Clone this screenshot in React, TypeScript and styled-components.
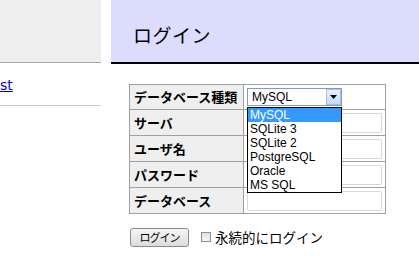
import React from "react";
import styled, { createGlobalStyle } from "styled-components";

const Global = createGlobalStyle`
  html, body { margin: 0; padding: 0; background: #fff; }
  body { font-family: "Liberation Sans", "Noto Sans CJK JP", sans-serif; color: #000; overflow: hidden; }
`;

const Page = styled.div`
  display: flex;
  gap: 10px;
  width: 419px;
  height: 269px;
  overflow: hidden;
`;

const Sidebar = styled.div`
  width: 101px;
  flex: none;
  display: flex;
  flex-direction: column;
`;

const SideHead = styled.div`
  height: 62px;
  background: #eeeeee;
  border-bottom: 1px solid #a8a8a8;
`;

const SideLink = styled.a`
  display: block;
  margin-top: 14px;
  height: 28px;
  font-family: "DejaVu Sans", sans-serif;
  font-size: 14px;
  line-height: 17px;
  color: #0000cc;
  text-decoration: underline;
`;

const SideRule = styled.div`
  border-top: 1px solid #cccccc;
`;

const Main = styled.div`
  flex: 1;
  display: flex;
  flex-direction: column;
`;

const Header = styled.div`
  background: #dcdcfc;
  border-bottom: 2px solid #000;
  display: flex;
  align-items: center;
  padding-left: 22px;
  box-sizing: border-box;
  height: 64px;
`;

const Title = styled.h1`
  margin: 0;
  font-family: "Noto Sans CJK JP", sans-serif;
  font-weight: 400;
  font-size: 19px;
  letter-spacing: 0.5px;
  padding-top: 6px;
`;

const Content = styled.div`
  padding: 20px 0 0 18px;
  position: relative;
`;

const FormTable = styled.table`
  border-collapse: collapse;
  width: 257px;
  border: 1px solid #a0a0a0;
`;

const Row = styled.tr<{ $h: number }>`
  height: ${(p) => p.$h}px;
`;

const Label = styled.th`
  width: 113px;
  background: #efefef;
  border: 1px solid #a0a0a0;
  text-align: left;
  padding: 0 0 0 4px;
  font-family: "Noto Sans CJK JP", sans-serif;
  font-weight: 700;
  font-size: 13px;
  line-height: 16px;
  white-space: nowrap;
`;

const Cell = styled.td`
  border: 1px solid #a0a0a0;
  padding: 0 3px;
`;

const TextInput = styled.input`
  display: block;
  box-sizing: border-box;
  width: 135px;
  height: 20px;
  border: 1px solid #d8d8d8;
  border-radius: 2px;
  margin: 0;
  padding: 0;
`;

const SelectBox = styled.div`
  box-sizing: border-box;
  width: 95px;
  height: 18px;
  border: 1px solid #7f9db9;
  display: flex;
  align-items: stretch;
  background: #fff;
`;

const SelectText = styled.span`
  flex: 1;
  font-size: 12px;
  line-height: 16px;
  padding-left: 4px;
`;

const SelectArrow = styled.span`
  width: 15px;
  box-sizing: border-box;
  border: 1px solid #a8c0e0;
  background: linear-gradient(#e6f0fb, #c4dbf6);
  display: flex;
  align-items: center;
  justify-content: center;
`;

const Dropdown = styled.ul`
  position: absolute;
  left: 136px;
  top: 43px;
  width: 95px;
  box-sizing: border-box;
  margin: 0;
  padding: 0;
  list-style: none;
  border: 1px solid #000;
  background: #fff;
`;

const Option = styled.li<{ $active?: boolean }>`
  height: 14px;
  font-size: 12px;
  line-height: 14px;
  padding-left: 2px;
  background: ${(p) => (p.$active ? "#3399ff" : "transparent")};
  color: ${(p) => (p.$active ? "#fff" : "#000")};
`;

const Actions = styled.div`
  display: flex;
  align-items: center;
  margin-top: 13px;
  margin-left: 1px;
`;

const Button = styled.button`
  width: 59px;
  height: 19px;
  box-sizing: border-box;
  border: 1px solid #8a8a8a;
  border-radius: 3px;
  background: linear-gradient(#f6f6f6, #dcdcdc);
  font-family: "Noto Sans CJK JP", sans-serif;
  font-size: 11px;
  line-height: 15px;
  padding: 0;
  letter-spacing: -1px;
`;

const Check = styled.span`
  width: 10px;
  height: 10px;
  box-sizing: border-box;
  border: 1px solid #8f8f8f;
  background: linear-gradient(#e0e0e0, #f8f8f8);
  margin-left: 12px;
  margin-right: 4px;
`;

const CheckLabel = styled.span`
  font-family: "Noto Sans CJK JP", sans-serif;
  font-size: 13.5px;
`;

const options = ["MySQL", "SQLite 3", "SQLite 2", "PostgreSQL", "Oracle", "MS SQL"];
const fields = ["サーバ", "ユーザ名", "パスワード", "データベース"];

export default function App() {
  return (
    <>
      <Global />
      <Page>
        <Sidebar>
          <SideHead />
          <SideLink href="#">st</SideLink>
          <SideRule />
        </Sidebar>
        <Main>
          <Header>
            <Title>ログイン</Title>
          </Header>
          <Content>
            <FormTable>
              <tbody>
                <Row $h={25}>
                  <Label>データベース種類</Label>
                  <Cell>
                    <SelectBox>
                      <SelectText>MySQL</SelectText>
                      <SelectArrow>
                        <svg width="7" height="4" viewBox="0 0 7 4">
                          <path d="M0 0h7L3.5 4z" fill="#000" />
                        </svg>
                      </SelectArrow>
                    </SelectBox>
                  </Cell>
                </Row>
                {fields.map((f) => (
                  <Row $h={26} key={f}>
                    <Label>{f}</Label>
                    <Cell>
                      <TextInput type={f === "パスワード" ? "password" : "text"} />
                    </Cell>
                  </Row>
                ))}
              </tbody>
            </FormTable>
            <Dropdown>
              {options.map((o, i) => (
                <Option key={o} $active={i === 0}>
                  {o}
                </Option>
              ))}
            </Dropdown>
            <Actions>
              <Button>ログイン</Button>
              <Check />
              <CheckLabel>永続的にログイン</CheckLabel>
            </Actions>
          </Content>
        </Main>
      </Page>
    </>
  );
}
